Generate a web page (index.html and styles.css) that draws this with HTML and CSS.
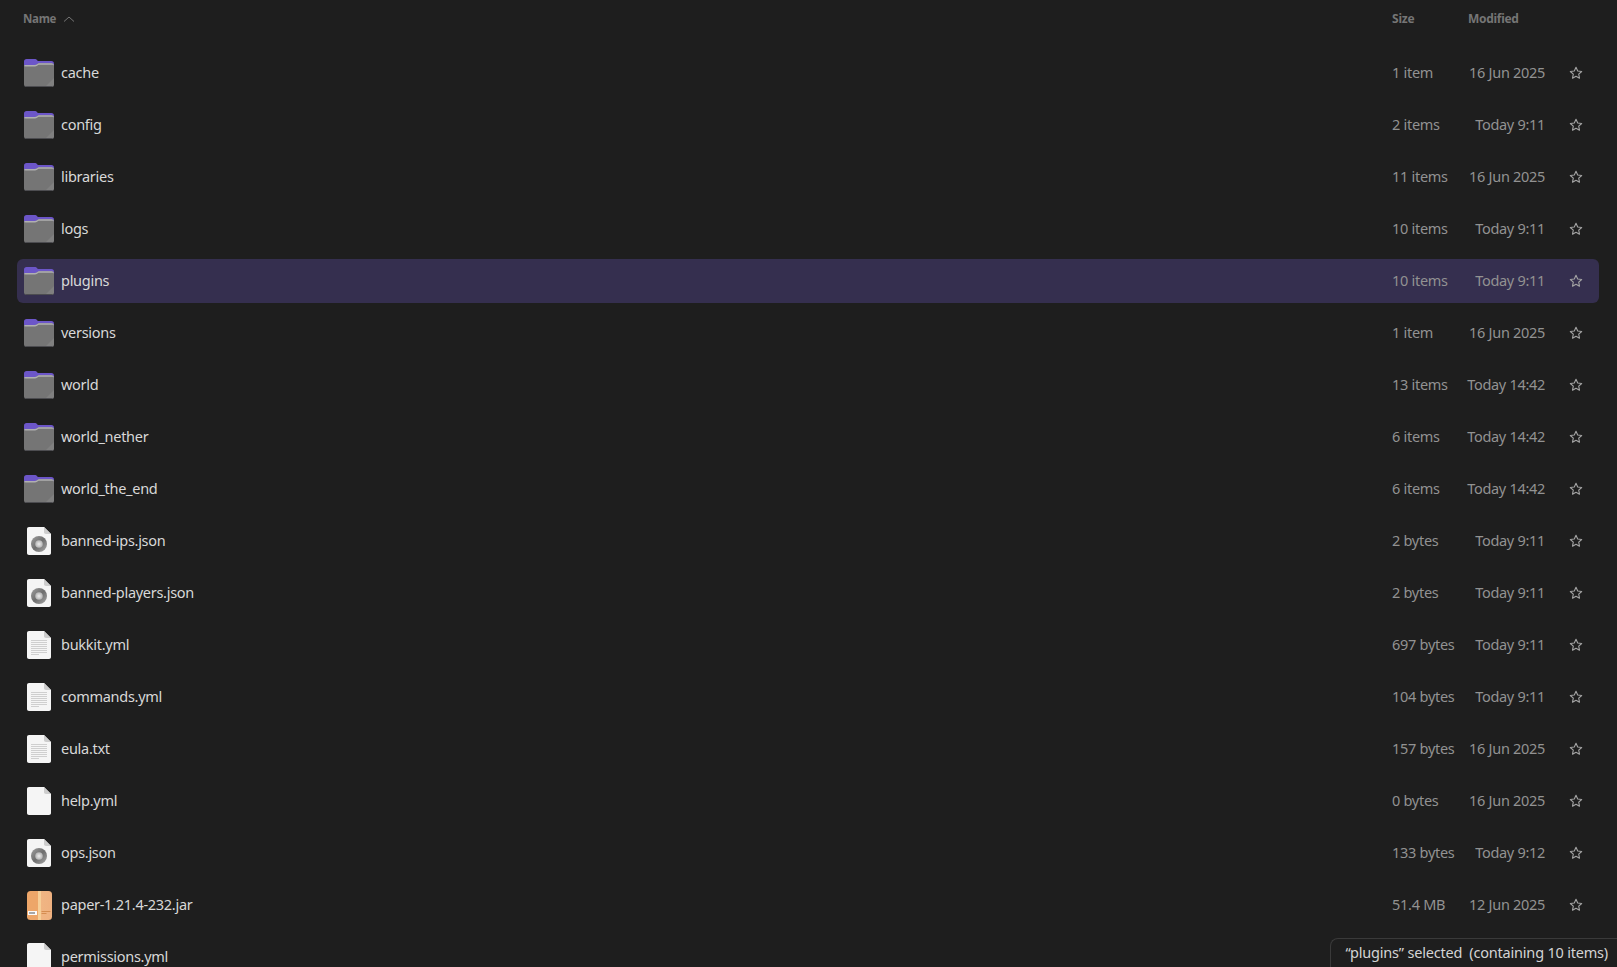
FILE: index.html
```html
<!DOCTYPE html>
<html lang="en">
<head>
    <meta charset="UTF-8">
    <title>plugins</title>
    <link rel="stylesheet" href="styles.css">
</head>
<body>
    <svg class="defs" width="0" height="0">
        <defs>
            <linearGradient id="ringGrad" x1="0" y1="0" x2="1" y2="1">
                <stop offset="0" stop-color="#a0a0a0"/>
                <stop offset="0.5" stop-color="#6e6e6e"/>
                <stop offset="1" stop-color="#a8a8a8"/>
            </linearGradient>
            <radialGradient id="holeGrad">
                <stop offset="0" stop-color="#ececec"/>
                <stop offset="1" stop-color="#b4b4b4"/>
            </radialGradient>
            <linearGradient id="jarGrad" x1="0" y1="0" x2="1" y2="0">
                <stop offset="0" stop-color="#eda669"/>
                <stop offset="0.44" stop-color="#eda669"/>
                <stop offset="0.56" stop-color="#f0b583"/>
                <stop offset="1" stop-color="#efb180"/>
            </linearGradient>
            <symbol id="folder" viewBox="0 0 30 28">
                <path d="M2.5 0h8c1.500 0 2.500 .6 3.200 2H27.500c1.500 0 2.500 1 2.500 2.500V10H0V2.500C0 1 1 0 2.500 0z" fill="#6c56c8"/>
                <path d="M0 7.500C0 6.700 .6 6 1.500 6H10c1.500 0 2.500 -.3 3.500 -1l.6 -.4c.4 -.3 .8 -.4 1.400 -.4H27.500c1.500 0 2.500 1 2.500 2.500V25.500c0 1.500 -1 2.500 -2.500 2.500H2.500C1 28 0 27 0 25.500z" fill="#757575"/>
                <path d="M0 7.500C0 6.700 .6 6 1.500 6H10c1.500 0 2.500 -.3 3.500 -1l.6 -.4c.4 -.3 .8 -.4 1.400 -.4H27.500c1.500 0 2.500 1 2.500 2.500v.2c0 -.6 -.8 -1.200 -2 -1.200H15.500c-.6 0 -1 .1 -1.400 .4l-.6 .4c-1 .7 -2 1 -3.500 1H1.500C.6 7 0 7.200 0 7.500z" fill="#b0b0b0"/>
                <path d="M30 19V25.500c0 1.500 -1 2.500 -2.500 2.500H21z" fill="#808080"/>
                <path d="M0 26c.2 1.200 1.100 2 2.500 2h25c1.400 0 2.300 -.8 2.500 -2 -.3 .6 -1 1 -2 1H2c-1 0 -1.700 -.4 -2 -1z" fill="#4c4c50"/>
            </symbol>
            <symbol id="page" viewBox="0 0 24 28">
                <path d="M2 0h15l7 7v19c0 1.200 -.8 2 -2 2H2c-1.200 0 -2 -.8 -2 -2V2C0 .8 .8 0 2 0z" fill="#f5f5f5"/>
                <path d="M17 0l7 7h-5c-1.200 0 -2 -.8 -2 -2z" fill="#cdcdcd"/>
            </symbol>
            <symbol id="lines" viewBox="0 0 24 28">
                <path d="M4 9.500h16M4 11.500h16M4 13.500h16M4 15.500h16M4 17.500h16M4 19.500h16M4 21.500h16M4 23.500h8" stroke="#cfcfcf" stroke-width="1" fill="none"/>
            </symbol>
            <symbol id="ring" viewBox="0 0 24 28">
                <circle cx="12" cy="17" r="8" fill="url(#ringGrad)"/>
                <circle cx="12" cy="17" r="3.800" fill="url(#holeGrad)"/>
            </symbol>
            <symbol id="jar" viewBox="0 0 25 29">
                <rect width="25" height="29" rx="3.500" fill="url(#jarGrad)"/>
                <rect x="11" width="3" height="29" fill="#f6cf98"/>
                <rect x="1" y="20" width="9" height="4" fill="#fbfbfb"/>
                <path d="M2.500 22h1M4.500 22h1M6.500 22h1" stroke="#555" stroke-width="2"/>
                <path d="M14.500 20.500h9M14.500 22.500h5" stroke="#d58d50" stroke-width="1"/>
            </symbol>
            <symbol id="star" viewBox="0 0 14 14">
                <path d="M7 1.300l1.700 3.700 4 .5-3 2.700.8 4L7 10.200l-3.500 2 .8-4-3-2.700 4-.5z" fill="none" stroke="currentColor" stroke-width="1.100" stroke-linejoin="round"/>
            </symbol>
        </defs>
    </svg>

    <div class="window">
        <div class="head">
            <div class="col-name head-name">Name
                <svg class="sort" width="12" height="6" viewBox="0 0 12 6"><path d="M1 5.500L6 1l5 4.500" fill="none" stroke="currentColor" stroke-width="1"/></svg>
            </div>
            <div class="col-size">Size</div>
            <div class="col-date">Modified</div>
        </div>

        <div class="list">
            <div class="row"><svg class="icon-folder"><use href="#folder"/></svg><div class="col-name">cache</div><div class="col-size">1 item</div><div class="col-date">16 Jun 2025</div><svg class="star"><use href="#star"/></svg></div>
            <div class="row"><svg class="icon-folder"><use href="#folder"/></svg><div class="col-name">config</div><div class="col-size">2 items</div><div class="col-date">Today 9:11</div><svg class="star"><use href="#star"/></svg></div>
            <div class="row"><svg class="icon-folder"><use href="#folder"/></svg><div class="col-name">libraries</div><div class="col-size">11 items</div><div class="col-date">16 Jun 2025</div><svg class="star"><use href="#star"/></svg></div>
            <div class="row"><svg class="icon-folder"><use href="#folder"/></svg><div class="col-name">logs</div><div class="col-size">10 items</div><div class="col-date">Today 9:11</div><svg class="star"><use href="#star"/></svg></div>
            <div class="row selected"><svg class="icon-folder"><use href="#folder"/></svg><div class="col-name">plugins</div><div class="col-size">10 items</div><div class="col-date">Today 9:11</div><svg class="star"><use href="#star"/></svg></div>
            <div class="row"><svg class="icon-folder"><use href="#folder"/></svg><div class="col-name">versions</div><div class="col-size">1 item</div><div class="col-date">16 Jun 2025</div><svg class="star"><use href="#star"/></svg></div>
            <div class="row"><svg class="icon-folder"><use href="#folder"/></svg><div class="col-name">world</div><div class="col-size">13 items</div><div class="col-date">Today 14:42</div><svg class="star"><use href="#star"/></svg></div>
            <div class="row"><svg class="icon-folder"><use href="#folder"/></svg><div class="col-name">world_nether</div><div class="col-size">6 items</div><div class="col-date">Today 14:42</div><svg class="star"><use href="#star"/></svg></div>
            <div class="row"><svg class="icon-folder"><use href="#folder"/></svg><div class="col-name">world_the_end</div><div class="col-size">6 items</div><div class="col-date">Today 14:42</div><svg class="star"><use href="#star"/></svg></div>
            <div class="row"><svg class="icon-file"><use href="#page"/><use href="#ring"/></svg><div class="col-name">banned-ips.json</div><div class="col-size">2 bytes</div><div class="col-date">Today 9:11</div><svg class="star"><use href="#star"/></svg></div>
            <div class="row"><svg class="icon-file"><use href="#page"/><use href="#ring"/></svg><div class="col-name">banned-players.json</div><div class="col-size">2 bytes</div><div class="col-date">Today 9:11</div><svg class="star"><use href="#star"/></svg></div>
            <div class="row"><svg class="icon-file"><use href="#page"/><use href="#lines"/></svg><div class="col-name">bukkit.yml</div><div class="col-size">697 bytes</div><div class="col-date">Today 9:11</div><svg class="star"><use href="#star"/></svg></div>
            <div class="row"><svg class="icon-file"><use href="#page"/><use href="#lines"/></svg><div class="col-name">commands.yml</div><div class="col-size">104 bytes</div><div class="col-date">Today 9:11</div><svg class="star"><use href="#star"/></svg></div>
            <div class="row"><svg class="icon-file"><use href="#page"/><use href="#lines"/></svg><div class="col-name">eula.txt</div><div class="col-size">157 bytes</div><div class="col-date">16 Jun 2025</div><svg class="star"><use href="#star"/></svg></div>
            <div class="row"><svg class="icon-file"><use href="#page"/></svg><div class="col-name">help.yml</div><div class="col-size">0 bytes</div><div class="col-date">16 Jun 2025</div><svg class="star"><use href="#star"/></svg></div>
            <div class="row"><svg class="icon-file"><use href="#page"/><use href="#ring"/></svg><div class="col-name">ops.json</div><div class="col-size">133 bytes</div><div class="col-date">Today 9:12</div><svg class="star"><use href="#star"/></svg></div>
            <div class="row"><svg class="icon-jar"><use href="#jar"/></svg><div class="col-name">paper-1.21.4-232.jar</div><div class="col-size">51.4 MB</div><div class="col-date">12 Jun 2025</div><svg class="star"><use href="#star"/></svg></div>
            <div class="row"><svg class="icon-file"><use href="#page"/></svg><div class="col-name">permissions.yml</div><div class="col-size"></div><div class="col-date"></div><svg class="star"><use href="#star"/></svg></div>
        </div>

        <div class="status">“plugins” selected  (containing 10 items)</div>
    </div>
</body>
</html>
```

FILE: styles.css
```css
html, body {
    margin: 0;
    height: 100%;
    overflow: hidden;
}
body {
    background: #1e1e1e;
    font-family: "Noto Sans", sans-serif;
    font-size: 14.5px;
    color: #d8d8d8;
}
.defs {
    display: block;
    height: 0;
}
.window {
    height: 967px;
    overflow: hidden;
}
.head {
    display: flex;
    align-items: center;
    height: 36px;
    padding: 0 17px;
    font-size: 12px;
    font-weight: 700;
    color: #757575;
}
.head .head-name {
    display: flex;
    align-items: center;
    gap: 7px;
    padding: 0 0 0 6px;
    font-size: 11.5px;
    letter-spacing: -0.3px;
}
.sort {
    margin-top: 2px;
}
.head .col-size {
    width: 76px;
    color: #757575;
    padding: 0;
    letter-spacing: -0.2px;
}
.head .col-date {
    width: 132px;
    text-align: left;
    color: #757575;
    padding: 0;
    letter-spacing: -0.3px;
}
.list {
    display: flex;
    flex-direction: column;
    gap: 8px;
    padding: 15px 18px 0 17px;
}
.row {
    display: flex;
    align-items: center;
    flex: none;
    height: 44px;
    border-radius: 6px;
}
.row.selected {
    background: #352f4f;
}
.col-name {
    flex: 1;
    letter-spacing: -0.28px;
    padding-bottom: 2px;
}
.col-size {
    width: 73px;
    color: #929292;
    letter-spacing: -0.28px;
    padding-bottom: 2px;
}
.col-date {
    width: 80px;
    text-align: right;
    white-space: nowrap;
    color: #929292;
    letter-spacing: -0.3px;
    padding-bottom: 2px;
}
.icon-folder {
    width: 30px;
    height: 28px;
    flex: none;
    margin: 0 7px;
}
.icon-file {
    width: 24px;
    height: 28px;
    flex: none;
    margin: 0 10px;
}
.icon-jar {
    width: 25px;
    height: 29px;
    flex: none;
    margin: 0 9px 0 10px;
}
.star {
    width: 14px;
    height: 14px;
    flex: none;
    margin: 0 16px 0 24px;
    color: #a4a4a4;
}
.status {
    position: absolute;
    right: 0;
    bottom: 0;
    height: 28px;
    line-height: 27px;
    padding: 0 9px 0 15px;
    background: #1e1e1e;
    border: 1px solid #3a3a3a;
    border-width: 1px 0 0 1px;
    border-top-left-radius: 8px;
    white-space: pre;
    letter-spacing: -0.2px;
    color: #d4d4d4;
}
```
